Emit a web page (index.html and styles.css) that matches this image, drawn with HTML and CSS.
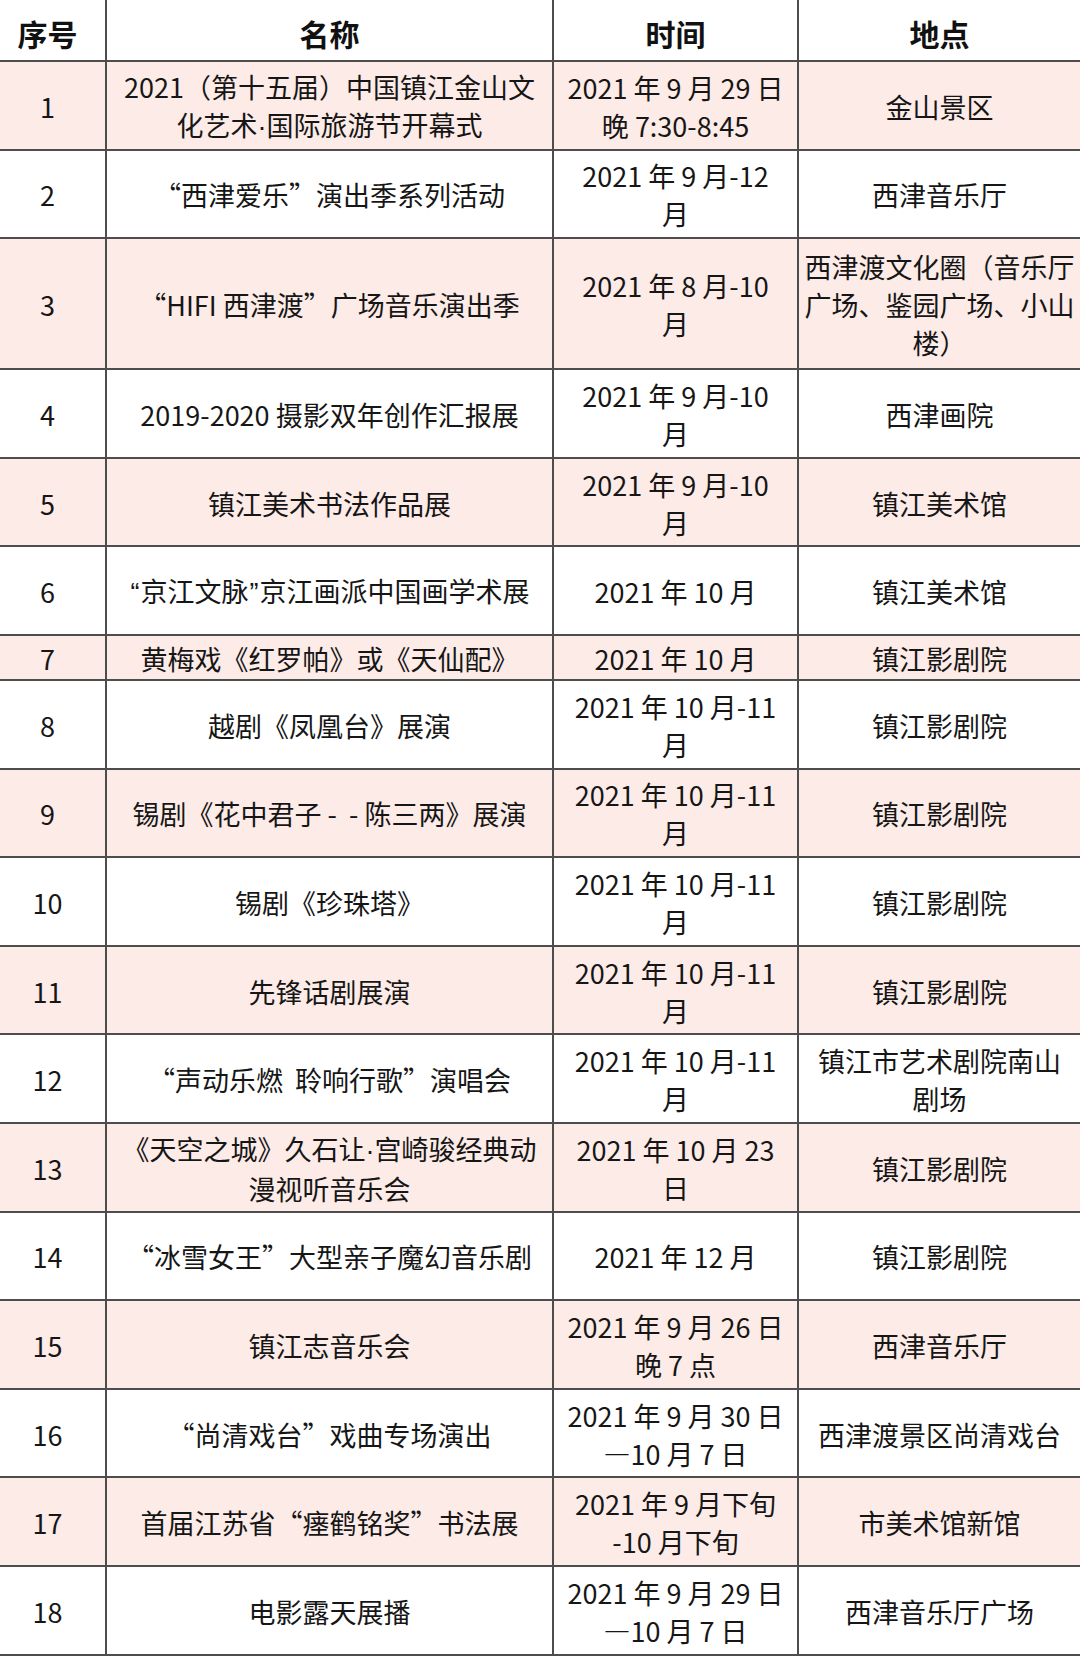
FILE: index.html
```html
<!DOCTYPE html>
<html lang="zh-CN">
<head>
<meta charset="utf-8">
<title>活动安排</title>
<link rel="stylesheet" href="styles.css">
</head>
<body>
<table class="schedule">
  <colgroup>
    <col class="c-no">
    <col class="c-name">
    <col class="c-time">
    <col class="c-place">
  </colgroup>
  <thead>
    <tr class="head"><th>序号</th><th>名称</th><th>时间</th><th>地点</th></tr>
  </thead>
  <tbody>
    <tr class="pink"><td>1</td><td>2021（第十五届）中国镇江金山文<br>化艺术<span class="lq">·</span>国际旅游节开幕式</td><td>2021 年 9 月 29 日<br>晚 7:30-8:45</td><td>金山景区</td></tr>
    <tr><td>2</td><td>“西津爱乐”演出季系列活动</td><td>2021 年 9 月-12<br>月</td><td>西津音乐厅</td></tr>
    <tr class="pink tall"><td>3</td><td>“HIFI 西津渡”广场音乐演出季</td><td>2021 年 8 月-10<br>月</td><td>西津渡文化圈（音乐厅<br>广场、鉴园广场、小山<br>楼）</td></tr>
    <tr><td>4</td><td>2019-2020 摄影双年创作汇报展</td><td>2021 年 9 月-10<br>月</td><td>西津画院</td></tr>
    <tr class="pink"><td>5</td><td>镇江美术书法作品展</td><td>2021 年 9 月-10<br>月</td><td>镇江美术馆</td></tr>
    <tr><td>6</td><td><span class="lq wq">“</span>京江文脉<span class="lq wq">”</span>京江画派中国画学术展</td><td>2021 年 10 月</td><td>镇江美术馆</td></tr>
    <tr class="pink short"><td>7</td><td>黄梅戏《红罗帕》或《天仙配》</td><td>2021 年 10 月</td><td>镇江影剧院</td></tr>
    <tr><td>8</td><td>越剧《凤凰台》展演</td><td>2021 年 10 月-11<br>月</td><td>镇江影剧院</td></tr>
    <tr class="pink"><td>9</td><td>锡剧《花中君子 -&nbsp;&nbsp;- 陈三两》展演</td><td>2021 年 10 月-11<br>月</td><td>镇江影剧院</td></tr>
    <tr><td>10</td><td>锡剧《珍珠塔》</td><td>2021 年 10 月-11<br>月</td><td>镇江影剧院</td></tr>
    <tr class="pink"><td>11</td><td>先锋话剧展演</td><td>2021 年 10 月-11<br>月</td><td>镇江影剧院</td></tr>
    <tr><td>12</td><td>“声动乐燃&nbsp;&nbsp;聆响行歌”演唱会</td><td>2021 年 10 月-11<br>月</td><td>镇江市艺术剧院南山<br>剧场</td></tr>
    <tr class="pink"><td>13</td><td>《天空之城》久石让<span class="lq">·</span>宫崎骏经典动<br>漫视听音乐会</td><td>2021 年 10 月 23<br>日</td><td>镇江影剧院</td></tr>
    <tr><td>14</td><td>“冰雪女王”大型亲子魔幻音乐剧</td><td>2021 年 12 月</td><td>镇江影剧院</td></tr>
    <tr class="pink"><td>15</td><td>镇江志音乐会</td><td>2021 年 9 月 26 日<br>晚 7 点</td><td>西津音乐厅</td></tr>
    <tr><td>16</td><td>“尚清戏台”戏曲专场演出</td><td>2021 年 9 月 30 日<br>—10 月 7 日</td><td>西津渡景区尚清戏台</td></tr>
    <tr class="pink"><td>17</td><td>首届江苏省“瘗鹤铭奖”书法展</td><td>2021 年 9 月下旬<br>-10 月下旬</td><td>市美术馆新馆</td></tr>
    <tr><td>18</td><td>电影露天展播</td><td>2021 年 9 月 29 日<br>—10 月 7 日</td><td>西津音乐厅广场</td></tr>
  </tbody>
</table>
</body>
</html>
```
FILE: styles.css
```css
html, body {
  margin: 0;
  padding: 0;
  background: #ffffff;
}

.schedule {
  width: 1080px;
  table-layout: fixed;
  border-collapse: collapse;
  font-family: "Noto Sans CJK SC", "Noto Sans", sans-serif;
  font-size: 27px;
  line-height: 38px;
  color: #161616;
}

.c-no { width: 106px; }
.c-name { width: 447px; }
.c-time { width: 245px; }
.c-place { width: 282px; }

.schedule th,
.schedule td {
  border: 2px solid #4d4d4d;
  padding: 3px 4px 0;
  text-align: center;
  vertical-align: middle;
  white-space: nowrap;
  font-weight: 400;
}

.schedule tr > :first-child {
  border-left: none;
  padding-right: 14px;
}
.schedule tr > :last-child { border-right: none; }
.schedule thead th { border-top: none; }

.head { height: 61px; }
.head th {
  font-weight: 700;
  font-size: 30px;
  padding-top: 6px;
  color: #111111;
}

tbody tr { height: 88.6px; }
tbody tr.tall { height: 131px; }
tbody tr.short { height: 45px; }

tr.pink { background: #fcebe7; }

.lq {
  font-family: "Liberation Sans", sans-serif;
}

.wq {
  padding: 0 1px;
}
```
